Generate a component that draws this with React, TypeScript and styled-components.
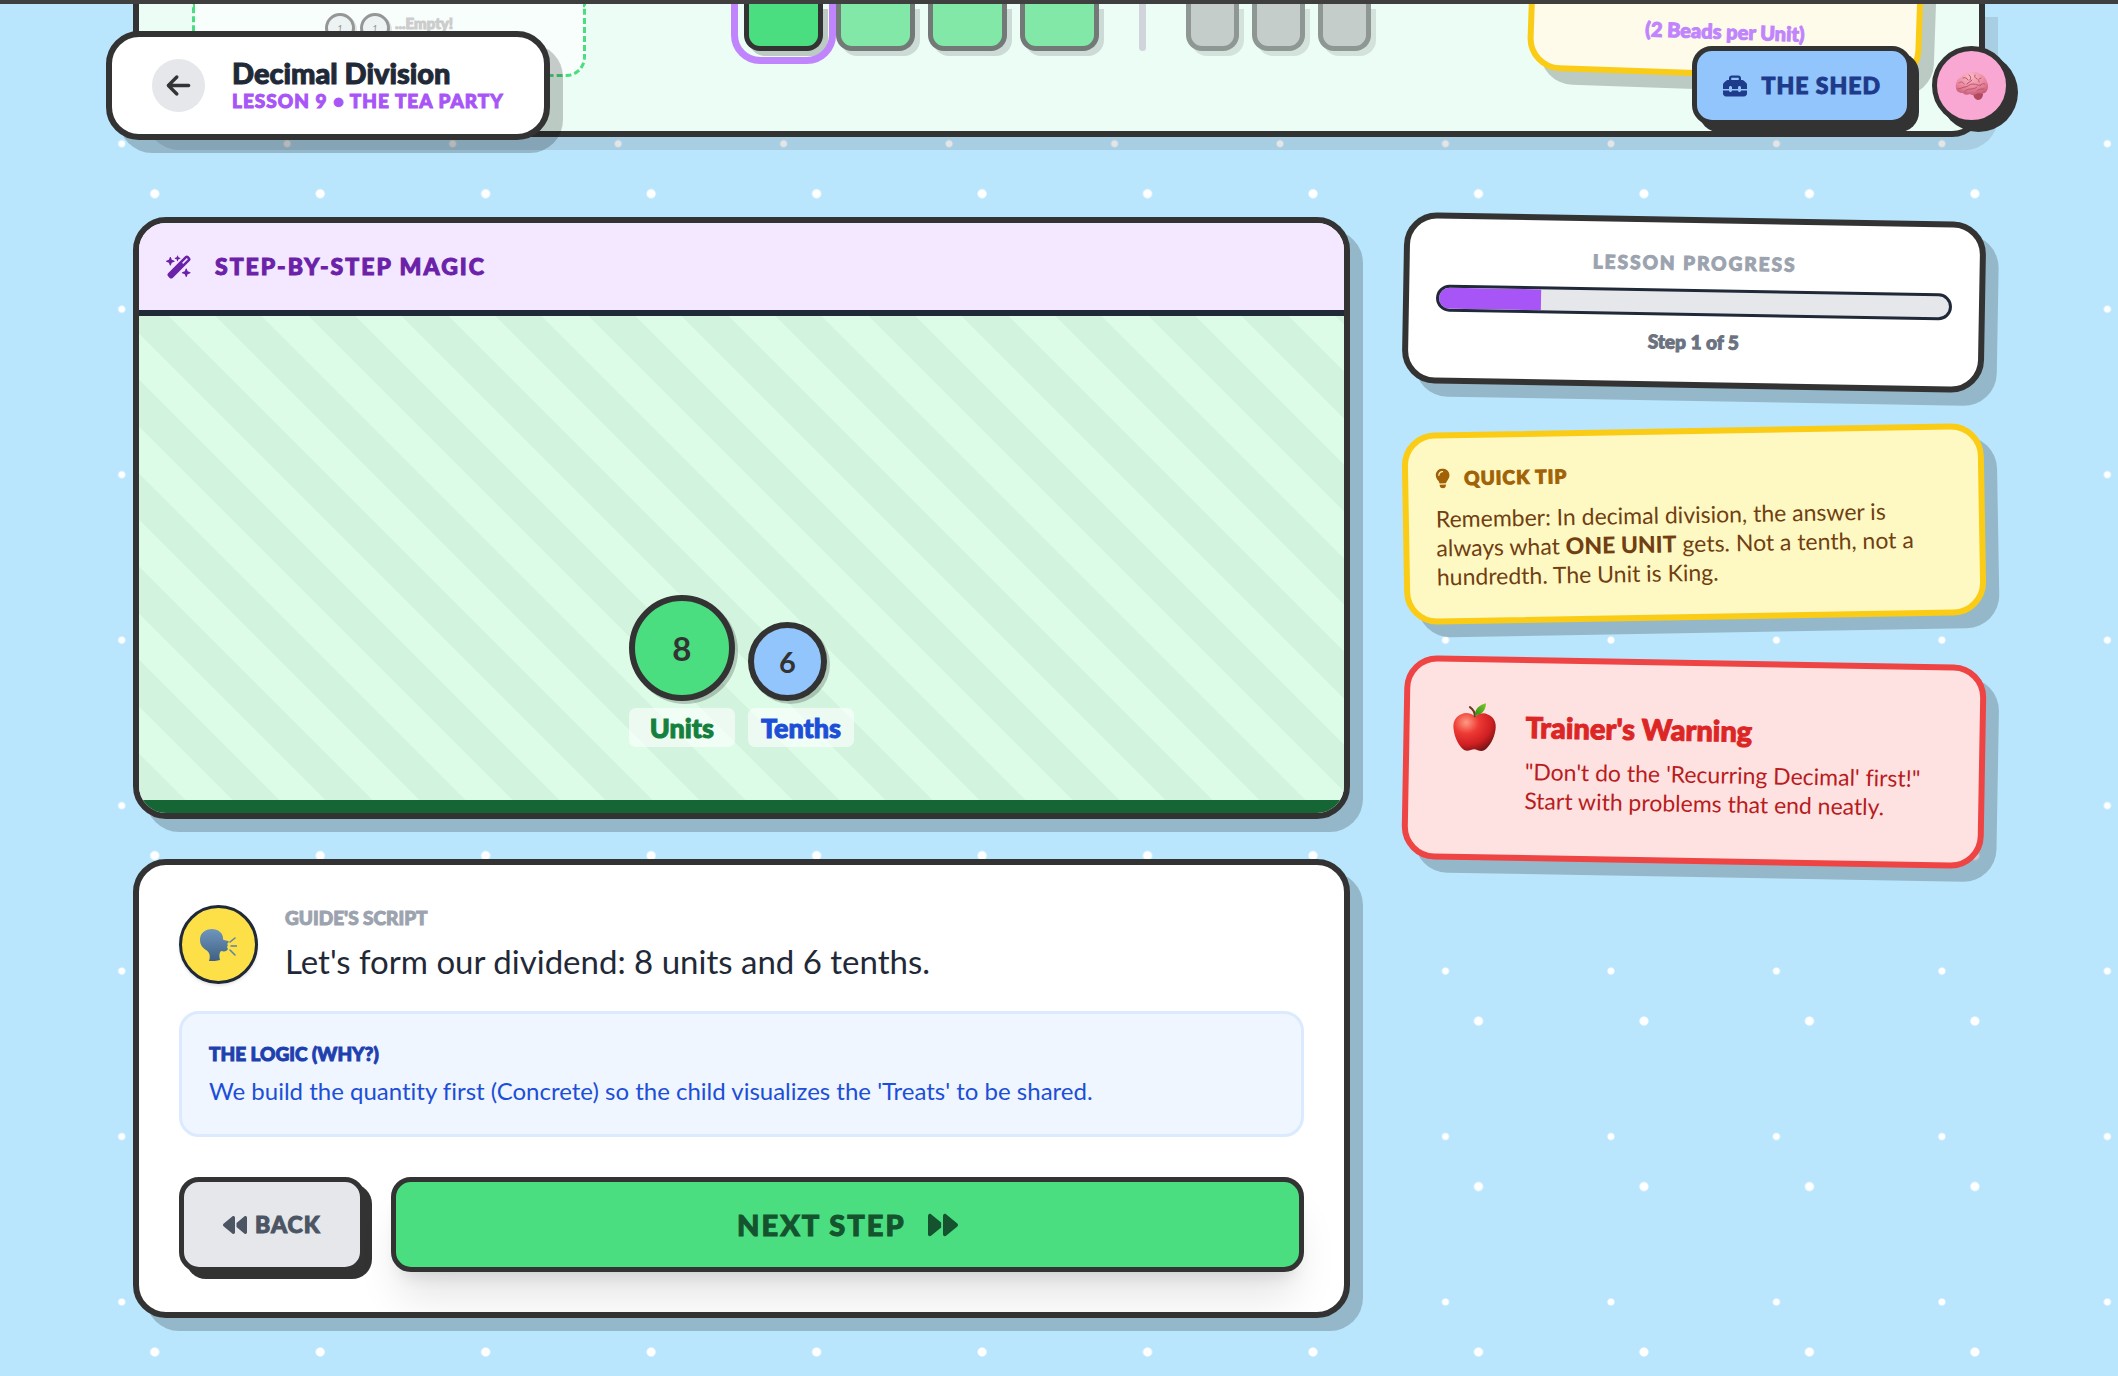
import React from "react";
import styled, { createGlobalStyle, css } from "styled-components";
import {
  FaArrowLeft,
  FaBackward,
  FaForward,
  FaLightbulb,
  FaToolbox,
  FaWandMagicSparkles,
} from "react-icons/fa6";

const ink = "#333333";
const slate = "#1f2937";

const GlobalStyle = createGlobalStyle`
  *, *::before, *::after { box-sizing: border-box; }
  html { background: #bae6fd; }
  body {
    margin: 0;
    overflow-x: hidden;
    font-family: Lato, "Open Sans", "Liberation Sans", sans-serif;
    font-variant-ligatures: none;
    color: ${slate};
  }
  h1, h2, h3, p { margin: 0; }
  button { font-family: inherit; cursor: pointer; }
`;

/* ---------- shared pieces ---------- */

const heavy = css`
  font-weight: 900;
  -webkit-text-stroke: 1px currentColor;
`;

const Eyebrow = styled.p<{ $color: string; $tracking?: number }>`
  ${heavy}
  font-size: 19px;
  line-height: 26px;
  letter-spacing: ${(p) => p.$tracking ?? 0}px;
  color: ${(p) => p.$color};
  text-transform: uppercase;
`;

const Card = styled.section<{ $border?: string; $fill?: string; $tilt?: number; $pad?: string }>`
  border: 6px solid ${(p) => p.$border ?? ink};
  border-radius: 33px;
  background: ${(p) => p.$fill ?? "#ffffff"};
  padding: ${(p) => p.$pad ?? "0"};
  box-shadow: 13px 13px 0 rgba(0, 0, 0, 0.2);
  transform: ${(p) => (p.$tilt ? `rotate(${p.$tilt}deg)` : "none")};
`;

const ChunkyButton = styled.button<{ $fill: string; $color: string }>`
  display: flex;
  align-items: center;
  justify-content: center;
  border: 5px solid ${ink};
  border-radius: 20px;
  background: ${(p) => p.$fill};
  color: ${(p) => p.$color};
  box-shadow: 7px 7px 0 ${ink};
  font-size: 23px;
  line-height: 33px;
  letter-spacing: 1px;
  ${heavy}
`;

/* ---------- page ---------- */

const Page = styled.div`
  min-height: 100vh;
  padding: 0 133px 53px;
  border-top: 4px solid #3f3f3f;
  background-color: #bae6fd;
  background-image:
    radial-gradient(circle, #ffffff 4px, transparent 5px),
    radial-gradient(circle, #ffffff 3px, transparent 4px);
  background-size: calc(100vw / 12.8) calc(100vw / 12.8);
  background-position: 72px 107px, 39px 57px;
  overflow: hidden;
`;

const TopBar = styled.header`
  position: absolute;
  top: 31px;
  left: 106px;
  right: 107px;
  z-index: 10;
  display: flex;
  align-items: center;
  justify-content: space-between;
`;

const TitleCard = styled.div`
  display: flex;
  align-items: center;
  gap: 27px;
  padding: 20px 40px;
  border: 6px solid ${ink};
  border-radius: 33px;
  background: #ffffff;
  box-shadow: 13px 13px 0 rgba(0, 0, 0, 0.2);
`;

const BackCircle = styled.button`
  display: flex;
  align-items: center;
  justify-content: center;
  width: 53px;
  height: 53px;
  border: 0;
  border-radius: 50%;
  background: #e5e7eb;
  color: ${ink};
`;

const PageTitle = styled.h1`
  ${heavy}
  font-size: 29px;
  line-height: 31px;
`;

const Actions = styled.div`
  display: flex;
  gap: 20px;
`;

const ShedButton = styled(ChunkyButton)`
  height: 79px;
  padding: 0 26px;
  gap: 14px;
`;

const BrainButton = styled(ChunkyButton)`
  width: 79px;
  height: 79px;
  padding: 0;
  border-radius: 50%;
`;

/* ---------- overview strip, scrolled under the header ---------- */

const Overview = styled.section`
  display: flex;
  align-items: flex-start;
  justify-content: space-between;
  height: 133px;
  padding: 0 56px 0 53px;
  border: 6px solid ${ink};
  border-top: 0;
  border-radius: 0 0 33px 33px;
  background: #ecfdf5;
  box-shadow: 13px 13px 0 rgba(0, 0, 0, 0.1);
`;

const Tray = styled.div`
  display: flex;
  justify-content: center;
  gap: 5px;
  width: 394px;
  height: 73px;
  padding-top: 9px;
  border: 3px dashed #4ade80;
  border-top: 0;
  border-radius: 0 0 20px 20px;
  background: rgba(255, 255, 255, 0.6);
`;

const EmptyBead = styled.span`
  display: flex;
  align-items: center;
  justify-content: center;
  width: 30px;
  height: 30px;
  border: 3px solid ${ink};
  border-radius: 50%;
  background: #e5e7eb;
  box-shadow: 2px 2px 0 rgba(0, 0, 0, 0.2);
  font-size: 10px;
  font-style: italic;
  color: ${ink};
  opacity: 0.5;
`;

const EmptyNote = styled.span`
  font-size: 15px;
  line-height: 20px;
  color: #cccccc;
  ${heavy}
`;

const Houses = styled.div`
  display: flex;
  gap: 40px;
`;

const HouseGroup = styled.div`
  display: flex;
  gap: 13px;
`;

const House = styled.span<{ $kind: "active" | "unit" | "tenth" }>`
  width: ${(p) => (p.$kind === "tenth" ? 53 : 79)}px;
  height: 47px;
  border: 5px solid ${ink};
  border-top: 0;
  border-radius: 0 0 16px 16px;
  background: ${(p) => (p.$kind === "tenth" ? "#9e9e9e" : "#4ade80")};
  box-shadow: 5px 5px 0 rgba(0, 0, 0, 0.2);
  opacity: ${(p) => (p.$kind === "active" ? 1 : p.$kind === "unit" ? 0.65 : 0.5)};
  outline: ${(p) => (p.$kind === "active" ? "7px solid #c084fc" : "none")};
  outline-offset: 6px;
`;

const Divider = styled.span`
  width: 7px;
  height: 47px;
  border-radius: 0 0 4px 4px;
  background: #d1d5db;
`;

const AnswerNote = styled.div`
  display: flex;
  align-items: flex-end;
  justify-content: center;
  width: 394px;
  height: 152px;
  margin-top: -79px;
  padding-bottom: 27px;
  border: 6px solid #facc15;
  border-radius: 33px;
  background: #fffbeb;
  box-shadow: 13px 13px 0 rgba(0, 0, 0, 0.2);
  transform: rotate(2deg);
  font-size: 20px;
  line-height: 26px;
  color: #c084fc;
  ${heavy}
`;

/* ---------- lesson ---------- */

const Lesson = styled.main`
  display: grid;
  grid-template-columns: repeat(3, minmax(0, 1fr));
  gap: 53px;
  align-items: start;
  margin-top: 80px;
`;

const MainColumn = styled.div`
  display: flex;
  flex-direction: column;
  gap: 40px;
  grid-column: span 2;
`;

const SideColumn = styled.aside`
  display: flex;
  flex-direction: column;
  gap: 40px;
`;

const BoardCard = styled(Card)`
  overflow: hidden;
`;

const BoardHeader = styled.div`
  display: flex;
  align-items: center;
  gap: 23px;
  padding: 27px;
  border-bottom: 6px solid ${slate};
  background: #f3e8ff;
  color: #6b21a8;
`;

const BoardTitle = styled.h2`
  ${heavy}
  font-size: 23px;
  line-height: 33px;
  letter-spacing: 2px;
  text-transform: uppercase;
`;

const Stage = styled.div`
  display: flex;
  align-items: flex-end;
  justify-content: center;
  gap: 13px;
  height: 497px;
  padding-bottom: 53px;
  border-bottom: 13px solid #166534;
  background: repeating-linear-gradient(
    45deg,
    #d2f3de 0,
    #d2f3de 33px,
    #dcfce7 33px,
    #dcfce7 66px
  );
`;

const BeadStack = styled.div`
  display: flex;
  flex-direction: column;
  gap: 7px;
  min-width: 106px;
`;

const Bead = styled.span<{ $size: number; $text: number; $fill: string }>`
  display: flex;
  align-items: center;
  justify-content: center;
  width: ${(p) => p.$size}px;
  height: ${(p) => p.$size}px;
  border: 6px solid ${ink};
  border-radius: 50%;
  background: ${(p) => p.$fill};
  box-shadow: 3px 3px 0 rgba(0, 0, 0, 0.2);
  font-size: ${(p) => p.$text}px;
  font-weight: 700;
  color: ${ink};
`;

const BeadLabel = styled.span<{ $color: string }>`
  padding: 3px 13px;
  border-radius: 7px;
  background: rgba(255, 255, 255, 0.6);
  font-size: 27px;
  line-height: 33px;
  text-align: center;
  color: ${(p) => p.$color};
  ${heavy}
`;

const ScriptRow = styled.div`
  display: flex;
  gap: 27px;
  margin-bottom: 27px;
`;

const Avatar = styled.div`
  display: flex;
  align-items: center;
  justify-content: center;
  width: 79px;
  height: 79px;
  border: 3px solid ${slate};
  border-radius: 50%;
  background: #fde047;
  box-shadow: 0 2px 3px rgba(0, 0, 0, 0.1);
`;

const Stack = styled.div`
  display: flex;
  flex-direction: column;
  gap: 7px;
`;

const ScriptLine = styled.p`
  font-size: 33px;
  line-height: 46px;
`;

const LogicBox = styled(Stack)`
  padding: 27px;
  border: 3px solid #dbeafe;
  border-radius: 20px;
  background: #eff6ff;
`;

const LogicText = styled.p`
  font-size: 24px;
  line-height: 33px;
  color: #1d4ed8;
`;

const StepButtons = styled.div`
  display: flex;
  gap: 26px;
  margin-top: 40px;
`;

const StepBack = styled(ChunkyButton)`
  height: 95px;
  padding: 0 39px;
  gap: 8px;
`;

const StepNext = styled(ChunkyButton)`
  flex: 1;
  height: 95px;
  gap: 22px;
  font-size: 29px;
  letter-spacing: 2px;
  box-shadow: 0 33px 41px -8px rgba(0, 0, 0, 0.1), 0 13px 17px -10px rgba(0, 0, 0, 0.12);
`;

const ScriptCard = styled(Card)`
  overflow: hidden;
`;

/* ---------- side cards ---------- */

const ProgressCard = styled(Card)`
  display: flex;
  flex-direction: column;
  align-items: stretch;
  gap: 13px;
  text-align: center;
`;

const Track = styled.div`
  height: 27px;
  border: 3px solid ${slate};
  border-radius: 14px;
  background: #e5e7eb;
  overflow: hidden;
`;

const Fill = styled.div`
  height: 100%;
  background: #a855f7;
`;

const StepCount = styled.p`
  font-size: 19px;
  line-height: 26px;
  color: #6b7280;
  ${heavy}
`;

const TipHead = styled.div`
  display: flex;
  align-items: center;
  gap: 14px;
  margin-bottom: 13px;
  color: #a16207;
`;

const TipBulb = styled(FaLightbulb)`
  width: 15px;
  height: 20px;
`;

const Note = styled.p<{ $color: string }>`
  font-size: 23px;
  line-height: 29px;
  color: ${(p) => p.$color};

  strong { font-weight: 900; }
`;

const WarningCard = styled(Card)`
  display: flex;
  gap: 26px;
`;

const WarningTitle = styled.h3`
  ${heavy}
  margin-bottom: 6px;
  font-size: 29px;
  line-height: 48px;
  color: #dc2626;
`;

/* ---------- drawings ---------- */

const Brain = () => (
  <svg width="34" height="28" viewBox="0 0 34 28" aria-hidden="true">
    <defs>
      <radialGradient id="brainTone" cx="0.45" cy="0.2" r="0.85">
        <stop offset="0" stopColor="#fbb9c6" />
        <stop offset="0.6" stopColor="#e8859c" />
        <stop offset="1" stopColor="#c25872" />
      </radialGradient>
    </defs>
    <path d="M19 20c3-1 8 0 9 2 0 3-2 6-5 6s-5-4-5-7z" fill="#b04a5c" />
    <path
      d="M1 16C0 12 2 7 6 5c2-3 6-5 9-4 3-2 8-1 10 1 4 1 6 4 7 8 2 3 1 8-1 10-2 2-5 2-8 1-2 2-6 3-8 1-3 1-6 1-7-1-4 0-7-2-7-5z"
      fill="url(#brainTone)"
    />
    <g fill="none" stroke="#b9556f" strokeWidth="1" strokeLinecap="round">
      <path d="M4 11c2-2 4-1 5 1M8 6c2-1 4 0 5 2M14 3c2 1 2 3 1 5M20 3c-1 2 0 3 2 4M26 6c-2 0-3 2-2 4M30 12c-2-1-4 0-5 2" />
      <path d="M3 17c3 0 4-2 7-2s4-3 8-3 4 2 7 1M10 20c0-2 3-3 6-3s5-1 6-2M17 8c-1 2-4 2-5 4M22 19c1-2 4-2 7-2" />
    </g>
  </svg>
);

const SpeakingHead = () => (
  <svg width="37" height="32" viewBox="0 0 37 32" aria-hidden="true">
    <defs>
      <linearGradient id="headTone" x1="0" y1="0" x2="0" y2="1">
        <stop offset="0" stopColor="#7096bd" />
        <stop offset="1" stopColor="#3f6084" />
      </linearGradient>
    </defs>
    <path
      d="M12 0c6 0 11 4 11 9 0 1 0 2 1 2l4 1c1 0 1 1 0 2l-1 1 1 1-1 2 1 2c-1 2-3 3-7 2-2 2-2 5-1 9-3 1-7 1-11 1 2-6 0-9-3-11-3-2-6-5-6-10C0 4 5 0 12 0z"
      fill="url(#headTone)"
    />
    <path d="M30 13l5-4M31 17h6M30 21l5 5" fill="none" stroke="#5c80a6" strokeWidth="1.5" strokeLinecap="round" />
  </svg>
);

const Apple = () => (
  <svg width="50" height="50" viewBox="0 0 50 50" aria-hidden="true">
    <defs>
      <radialGradient id="appleTone" cx="0.3" cy="0.25" r="0.85">
        <stop offset="0" stopColor="#ff9a82" />
        <stop offset="0.35" stopColor="#ee3a35" />
        <stop offset="0.7" stopColor="#cf1f22" />
        <stop offset="1" stopColor="#6e1212" />
      </radialGradient>
      <linearGradient id="leafTone" x1="0" y1="1" x2="1" y2="0">
        <stop offset="0" stopColor="#2f8a12" />
        <stop offset="1" stopColor="#7ccb2c" />
      </linearGradient>
    </defs>
    <path
      d="M25 14c4-3 9-4 13-2 6 2 9 8 8 15-1 9-6 18-11 21-4 2-7-1-10-1s-6 3-10 1C10 45 5 36 4 27c-1-7 2-13 8-15 4-2 9-1 13 2z"
      fill="url(#appleTone)"
    />
    <path d="M25 14c0-3-2-7-5-9" fill="none" stroke="#6b3a20" strokeWidth="2" strokeLinecap="round" />
    <path d="M25 13c0-6 4-10 11-12 0 7-4 12-11 12z" fill="url(#leafTone)" />
  </svg>
);

/* ---------- app ---------- */

const step = 1;
const steps = 5;

export default function App() {
  return (
    <>
      <GlobalStyle />
      <Page>
        <TopBar>
          <TitleCard>
            <BackCircle type="button" aria-label="Back to lessons">
              <FaArrowLeft size={27} />
            </BackCircle>
            <div>
              <PageTitle>Decimal Division</PageTitle>
              <Eyebrow $color="#a855f7" $tracking={1}>Lesson 9 • The Tea Party</Eyebrow>
            </div>
          </TitleCard>
          <Actions>
            <ShedButton type="button" $fill="#93c5fd" $color="#1e3a8a">
              <FaToolbox size={24} />
              THE SHED
            </ShedButton>
            <BrainButton type="button" aria-label="Brain" $fill="#f9a8d4" $color={ink}>
              <Brain />
            </BrainButton>
          </Actions>
        </TopBar>

        <Overview>
          <Tray>
            <EmptyBead>1</EmptyBead>
            <EmptyBead>1</EmptyBead>
            <EmptyNote>...Empty!</EmptyNote>
          </Tray>
          <Houses>
            <HouseGroup>
              <House $kind="active" />
              <House $kind="unit" />
              <House $kind="unit" />
              <House $kind="unit" />
            </HouseGroup>
            <Divider />
            <HouseGroup>
              <House $kind="tenth" />
              <House $kind="tenth" />
              <House $kind="tenth" />
            </HouseGroup>
          </Houses>
          <AnswerNote>(2 Beads per Unit)</AnswerNote>
        </Overview>

        <Lesson>
          <MainColumn>
            <BoardCard>
              <BoardHeader>
                <FaWandMagicSparkles size={26} />
                <BoardTitle>Step-by-Step Magic</BoardTitle>
              </BoardHeader>
              <Stage>
                <BeadStack>
                  <Bead $size={106} $text={33} $fill="#4ade80">8</Bead>
                  <BeadLabel $color="#15803d">Units</BeadLabel>
                </BeadStack>
                <BeadStack>
                  <Bead $size={79} $text={29} $fill="#93c5fd">6</Bead>
                  <BeadLabel $color="#1d4ed8">Tenths</BeadLabel>
                </BeadStack>
              </Stage>
            </BoardCard>

            <ScriptCard $pad="40px">
              <ScriptRow>
                <Avatar>
                  <SpeakingHead />
                </Avatar>
                <Stack>
                  <Eyebrow $color="#9ca3af">Guide's Script</Eyebrow>
                  <ScriptLine>Let's form our dividend: 8 units and 6 tenths.</ScriptLine>
                </Stack>
              </ScriptRow>
              <LogicBox>
                <Eyebrow $color="#1e40af">The Logic (Why?)</Eyebrow>
                <LogicText>
                  We build the quantity first (Concrete) so the child visualizes the 'Treats' to be shared.
                </LogicText>
              </LogicBox>
              <StepButtons>
                <StepBack type="button" $fill="#e5e7eb" $color="#4b5563">
                  <FaBackward size={24} />
                  BACK
                </StepBack>
                <StepNext type="button" $fill="#4ade80" $color="#14532d">
                  NEXT STEP
                  <FaForward size={30} />
                </StepNext>
              </StepButtons>
            </ScriptCard>
          </MainColumn>

          <SideColumn>
            <ProgressCard $tilt={1} $pad="27px">
              <Eyebrow $color="#9ca3af" $tracking={2}>Lesson Progress</Eyebrow>
              <Track
                role="progressbar"
                aria-label="Lesson progress"
                aria-valuemin={0}
                aria-valuemax={steps}
                aria-valuenow={step}
              >
                <Fill style={{ width: `${(step / steps) * 100}%` }} />
              </Track>
              <StepCount>Step {step} of {steps}</StepCount>
            </ProgressCard>

            <Card $tilt={-1} $pad="27px" $border="#facc15" $fill="#fef9c3">
              <TipHead>
                <TipBulb />
                <Eyebrow as="h3" $color="#a16207" $tracking={1}>Quick Tip</Eyebrow>
              </TipHead>
              <Note $color="#713f12">
                Remember: In decimal division, the answer is always what <strong>ONE UNIT</strong> gets. Not a
                tenth, not a hundredth. The Unit is King.
              </Note>
            </Card>

            <WarningCard $tilt={1} $pad="40px" $border="#ef4444" $fill="#fee2e2">
              <Apple />
              <div>
                <WarningTitle>Trainer's Warning</WarningTitle>
                <Note $color="#b91c1c">
                  "Don't do the 'Recurring Decimal' first!"
                  <br />
                  Start with problems that end neatly.
                </Note>
              </div>
            </WarningCard>
          </SideColumn>
        </Lesson>
      </Page>
    </>
  );
}
